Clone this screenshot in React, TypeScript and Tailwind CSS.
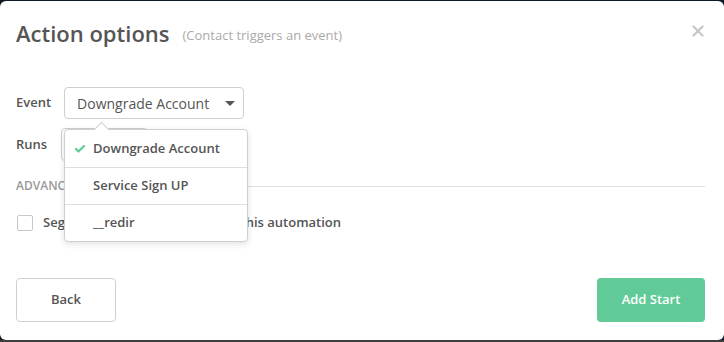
import { Check, X } from "lucide-react";

const font = { fontFamily: '"Open Sans", "Noto Sans", sans-serif' };

function Caret() {
  return (
    <svg width="10" height="5" viewBox="0 0 10 5" className="fill-[#555]">
      <path d="M0 0h10L5 5z" />
    </svg>
  );
}

function EventDropdown() {
  const items = ["Downgrade Account", "Service Sign UP", "__redir"];
  return (
    <div className="absolute left-0 top-[42px] z-10 w-[184px] rounded-[4px] border border-[#cfcfcf] bg-white shadow-[0_2px_6px_rgba(0,0,0,0.12)]">
      {/* notch */}
      <div className="absolute left-[31px] top-[-6px] h-[11px] w-[11px] rotate-45 border-l border-t border-[#cfcfcf] bg-white" />
      {items.map((item, i) => (
        <div
          key={item}
          className={`relative flex h-[37px] items-center pl-[28px] text-[13px] font-semibold text-[#555] ${
            i > 0 ? "border-t border-[#dedede]" : ""
          }`}
        >
          {i === 0 && (
            <Check className="absolute left-[9px] h-[12px] w-[12px] text-[#5fcb99]" strokeWidth={4.5} />
          )}
          {item}
        </div>
      ))}
    </div>
  );
}

export default function App() {
  return (
    <div className="flex h-[342px] w-[724px] flex-col bg-[#0f1826]" style={font}>
      <div className="mt-[1px] flex h-[339px] flex-col rounded-[6px] bg-white pl-4 pr-[19px]">
        {/* Header */}
        <div className="flex items-start pt-[16px]">
          <h1 className="text-[22px] font-semibold leading-[32px] text-[#555]">Action options</h1>
          <span className="ml-[13px] mt-[9px] text-[13px] text-[#aaa]">(Contact triggers an event)</span>
          <X className="ml-auto mt-[5px] mr-[-2px] h-[18px] w-[18px] text-[#c8c8c8]" strokeWidth={3} />
        </div>

        {/* Event */}
        <div className="mt-[38px] flex items-center">
          <span className="mr-[13px] text-[13px] font-semibold text-[#555]">Event</span>
          <div className="relative">
            <div className="flex h-[32px] w-[180px] items-center justify-between rounded-[4px] border border-[#cfcfcf] pl-3 pr-[8px] text-[14px] text-[#555]">
              Downgrade Account
              <Caret />
            </div>
            <EventDropdown />
          </div>
        </div>

        {/* Runs */}
        <div className="mt-[9px] flex items-center">
          <span className="mr-[14px] text-[13px] font-semibold text-[#555]">Runs</span>
          <div className="flex h-[33px] w-[87px] items-center rounded-[4px] border border-[#cfcfcf] pl-3 text-[14px] text-[#555]">
            Once
          </div>
        </div>

        {/* Advanced */}
        <div className="mt-[16px] flex items-center">
          <span className="text-[12px] font-semibold uppercase text-[#999]">Advanced options</span>
          <div className="ml-3 h-px flex-1 bg-[#e0e0e0]" />
        </div>

        <div className="mt-[18px] flex items-center">
          <div className="ml-px h-[16px] w-[16px] rounded-[2px] border border-[#c8c8c8]" />
          <span className="ml-[10px] text-[13px] font-semibold text-[#555]">
            Segment contacts that entered this automation
          </span>
        </div>

        {/* Footer */}
        <div className="mt-auto mb-[18px] flex items-center justify-between">
          <button className="h-[44px] w-[100px] rounded-[4px] border border-[#cfcfcf] bg-white text-[13px] font-semibold text-[#555]">
            Back
          </button>
          <button className="h-[44px] w-[108px] rounded-[4px] bg-[#60cb99] text-[13px] font-semibold text-white">
            Add Start
          </button>
        </div>
      </div>
      <div className="h-[2px] bg-[#3e3e3e]" />
    </div>
  );
}
